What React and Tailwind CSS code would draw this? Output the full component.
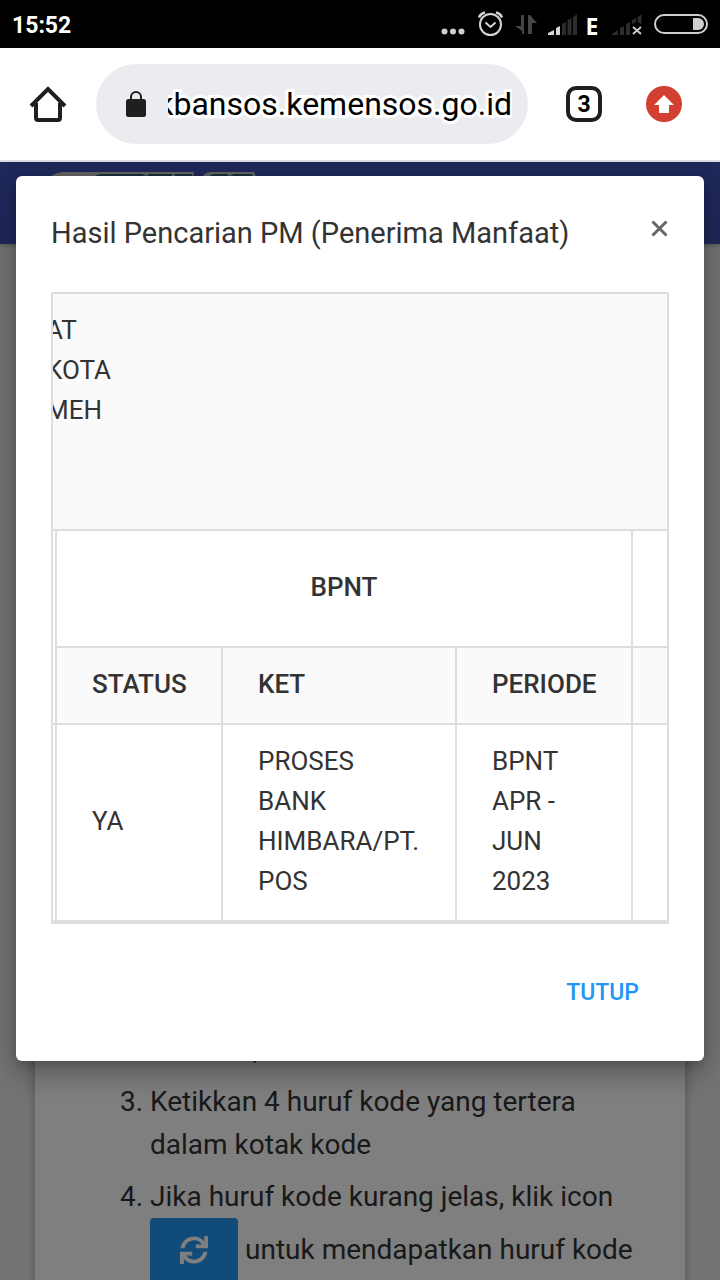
import { FaSync } from 'react-icons/fa';

function StatusBar() {
  return (
    <header className="flex h-12 shrink-0 items-center justify-between bg-black px-3 text-white">
      <span className="pt-1 text-[23px] font-bold leading-8">15:52</span>
      <div className="flex items-center">
        <svg width="140" height="48" viewBox="440 0 140 48" fill="none">
          <g fill="#cfcfcf">
            <circle cx="444.5" cy="31.500" r="3" />
            <circle cx="453" cy="31.500" r="3" />
            <circle cx="461.500" cy="31.500" r="3" />
          </g>
          <g stroke="#d6d6d6" strokeWidth="2">
            <circle cx="490.500" cy="24.500" r="10.500" />
            <path d="M485.500 22.500l5 4.500 5-4.500" />
            <path d="M479 17.500c1-2.500 3.500-4.500 6-5M502 17.500c-1-2.500-3.500-4.500-6-5" strokeWidth="2.500" />
          </g>
          <path d="M524 15v19h-2v-3l-7-5h6V15zM528 34V15h2l7 8h-5v11z" fill="#454545" />
          <path d="M548 35v-2l6-3v5zM556 35v-7l4-2v9z" fill="#d6d6d6" />
          <path d="M562 35V24l4-2v13zM567.500 35V20l4-2v17zM573 35V17l4-3v21z" fill="#2c2c2c" />
        </svg>
        <span className="w-6 pt-1 text-center font-['Open_Sans',sans-serif] text-[23px] font-bold leading-8">E</span>
        <svg width="104" height="48" viewBox="604 0 104 48" fill="none">
          <path d="M612 35v-1l6-4v5zM620 35v-7l4-2v9zM626 35V24l4-2v13zM632 24v-4l4-2v4zM637.500 22v-5l4-3v10z" fill="#2c2c2c" />
          <path d="M633 27l8 7M641 27l-8 7" stroke="#c8c8c8" strokeWidth="2" />
          <rect x="655" y="15" width="52" height="18" rx="9" stroke="#cfcfcf" strokeWidth="2" />
          <path d="M693 18h5a6 6 0 0 1 0 12h-5z" fill="#cfcfcf" />
        </svg>
      </div>
    </header>
  );
}

function BrowserBar() {
  return (
    <div className="flex h-[114px] shrink-0 items-center border-b-2 border-[#dadce0] bg-white pl-7">
      <button aria-label="Home" className="mr-7">
        <svg width="40" height="40" viewBox="0 0 40 40" fill="none" stroke="#1f1f1f" strokeWidth="4">
          <path d="M3 22L20 5l17 17" />
          <path d="M8 19v15q0 2 2 2h20q2 0 2-2V19" />
        </svg>
      </button>
      <div className="flex h-20 min-w-0 flex-1 items-center rounded-full bg-[#ebecf0] pl-[30px] pr-3">
        <svg width="20" height="26" viewBox="0 0 20 26" fill="none" className="mr-[22px] shrink-0">
          <rect y="8" width="20" height="18" rx="2.500" fill="#1f1f1f" />
          <path d="M5 9V6a5 5 0 0 1 10 0v3" stroke="#1f1f1f" strokeWidth="2" />
        </svg>
        <div className="flex min-w-0 flex-1 justify-end overflow-hidden">
          <input
            aria-label="Address"
            defaultValue="kbansos.kemensos.go.id"
            className="w-96 shrink-0 bg-transparent pr-1 text-right text-[32px] leading-[48px] text-black outline-none [-webkit-text-stroke:6px_white] [paint-order:stroke_fill]"
          />
        </div>
      </div>
      <button className="ml-[38px] flex size-9 items-center justify-center rounded-[10px] border-4 border-[#1f1f1f] text-[23px] font-bold leading-none text-black">
        3
      </button>
      <button aria-label="Update" className="ml-11 mr-[38px]">
        <svg width="36" height="36" viewBox="0 0 36 36">
          <circle cx="18" cy="18" r="18" fill="#d23f31" />
          <path d="M18 9l10 10h-5v8H13v-8H8z" fill="#fff" />
        </svg>
      </button>
    </div>
  );
}

function PageBehind() {
  return (
    <div className="bg-[#e9e9e9]">
      <div className="h-[82px] bg-[#3f51b5] pl-11 shadow-[0_1px_5px_rgba(0,0,0,0.3)]">
        <svg width="216" height="24" viewBox="44 162 216 24">
          <path d="M46 182q6-10 18-10h130l-2 10zM199 182l4-6q3-4 8-4h43l4 10z" fill="#c9c6c2" />
          <path d="M92 184l3-8q3-2 9-2h38l4 2 4-2h22l-2 10zM175 174h17l-2 10h-17zM205 184q2-10 10-10h11l4 2 4-2h18l4 10z" fill="#2e5a70" />
        </svg>
      </div>
      <div className="mx-[35px] bg-white pt-[784px] shadow-[0_2px_10px_rgba(0,0,0,0.3)]">
        <ol start={2} className="list-decimal pb-10 pl-[115px] pr-8 text-[28px] leading-[43px] text-[#333]">
          <li className="mb-[9px] list-none pl-[103px]">,</li>
          <li className="mb-[9px]">
            Ketikkan 4 huruf kode yang tertera
            <br />
            dalam kotak kode
          </li>
          <li className="whitespace-nowrap">
            Jika huruf kode kurang jelas, klik icon
            <br />
            <button aria-label="Refresh" className="mr-[7px] inline-flex h-[68px] w-[88px] items-center justify-center rounded bg-[#2196f3] pb-1 align-middle text-white">
              <FaSync size={28} />
            </button>
            untuk mendapatkan huruf kode
          </li>
        </ol>
      </div>
    </div>
  );
}

function ResultTable() {
  const cell = 'border-l-2 border-t-2 border-[#ddd] pb-[19px] pl-[35px] pt-4 text-left';

  return (
    <div className="overflow-hidden border-2 border-[#ddd]">
      <table className="w-full table-fixed border-separate border-spacing-0 text-[26px] leading-10">
        <colgroup>
          <col className="w-[2px]" />
          <col className="w-[166px]" />
          <col />
          <col className="w-[176px]" />
          <col className="w-9" />
        </colgroup>
        <tbody>
          <tr>
            <td colSpan={5} className="h-[235px] bg-[#fafafa] pt-4 align-top">
              <div className="-ml-[7px]">
                AT
                <br />
                KOTA
                <br />
                MEH
              </div>
            </td>
          </tr>
          <tr>
            <td rowSpan={2} className="border-t-2 border-[#ddd]" />
            <th colSpan={3} className="h-[117px] border-l-2 border-t-2 border-[#ddd] pb-[19px] pt-4 text-center font-medium">
              BPNT
            </th>
            <td className="border-l-2 border-t-2 border-[#ddd]" />
          </tr>
          <tr className="bg-[#fafafa]">
            <th className={`${cell} font-medium`}>STATUS</th>
            <th className={`${cell} font-medium`}>KET</th>
            <th className={`${cell} font-medium`}>PERIODE</th>
            <td className="border-l-2 border-t-2 border-[#ddd]" />
          </tr>
          <tr>
            <td className="border-b-2 border-t-2 border-[#ddd]" />
            <td className={`${cell} border-b-2`}>YA</td>
            <td className={`${cell} border-b-2 pr-[35px]`}>
              PROSES
              <br />
              BANK
              <br />
              HIMBARA/PT.
              <br />
              POS
            </td>
            <td className={`${cell} border-b-2 pr-[35px]`}>
              BPNT
              <br />
              APR -
              <br />
              JUN
              <br />
              2023
            </td>
            <td className="border-b-2 border-l-2 border-t-2 border-[#ddd]" />
          </tr>
        </tbody>
      </table>
    </div>
  );
}

function ResultDialog() {
  return (
    <div className="absolute inset-0 bg-black/50 px-4 pt-[14px]">
      <div role="dialog" className="rounded-md bg-white px-[35px] pb-[41px] text-[#333] shadow-[0_12px_30px_rgba(0,0,0,0.33),0_4px_8px_rgba(0,0,0,0.12)]">
        <div className="flex h-[116px] items-start justify-between pt-9">
          <h4 className="text-[29px] leading-[42px]">Hasil Pencarian PM (Penerima Manfaat)</h4>
          <button aria-label="Close" className="mt-2 text-[#666]">
            <svg width="18" height="18" viewBox="0 0 18 18" stroke="currentColor" strokeWidth="3">
              <path d="M1.500 1.500l14 14M15.500 1.500l-14 14" />
            </svg>
          </button>
        </div>
        <ResultTable />
        <div className="flex justify-end pt-[41px]">
          <button className="h-[55px] px-[30px] text-[23px] font-medium leading-[55px] text-[#2196f3]">TUTUP</button>
        </div>
      </div>
    </div>
  );
}

export default function App() {
  return (
    <div className="flex h-screen flex-col overflow-hidden font-[Roboto,sans-serif]">
      <StatusBar />
      <BrowserBar />
      <main className="relative min-h-0 flex-1 overflow-hidden bg-[#e9e9e9]">
        <PageBehind />
        <ResultDialog />
      </main>
    </div>
  );
}
